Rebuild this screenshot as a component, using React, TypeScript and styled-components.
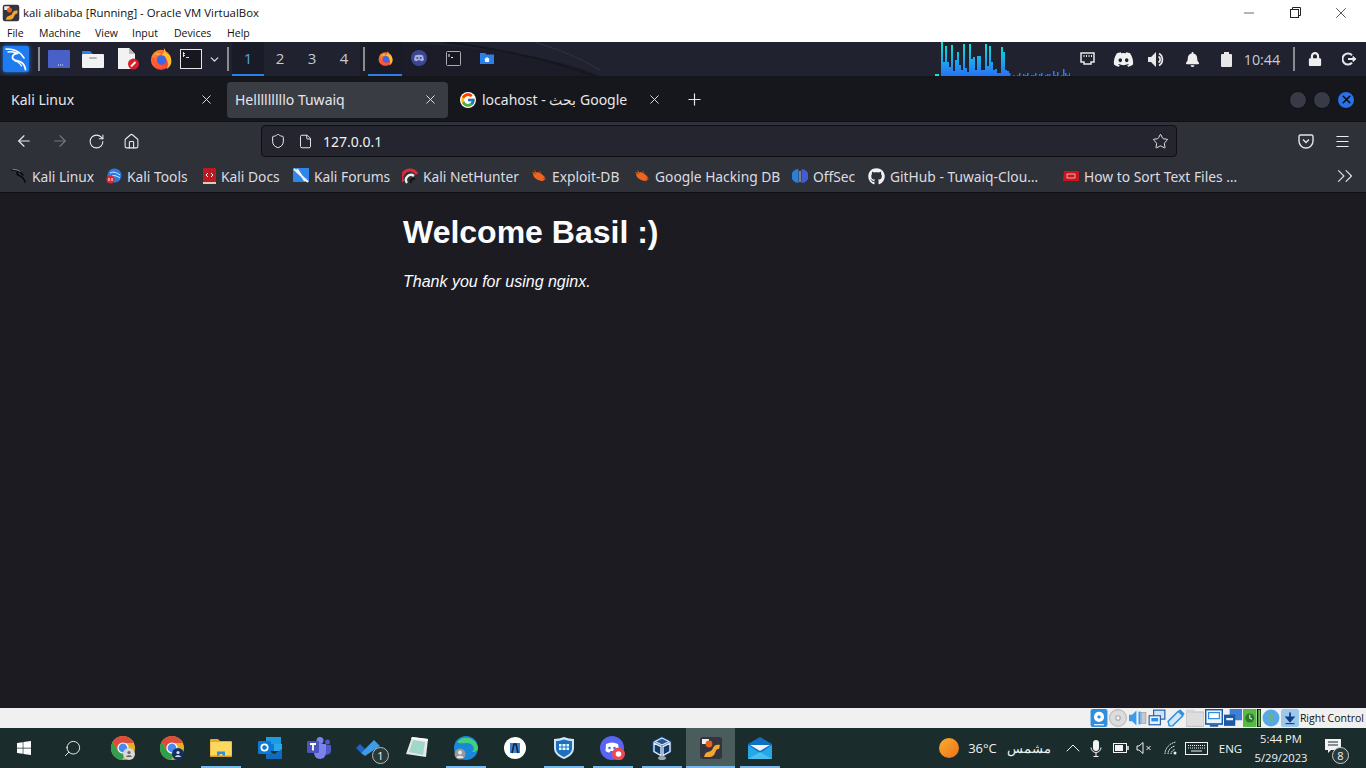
import React from "react";
import styled, { createGlobalStyle } from "styled-components";
import {
  ArrowLeft,
  ArrowRight,
  ChevronDown,
  ChevronUp,
  ChevronsRight,
  File,
  Home,
  Menu,
  Minus,
  Plus,
  RotateCw,
  Search,
  Shield,
  Star,
  X,
} from "lucide-react";
import { FaDiscord, FaGithub, FaWindows, FaBell, FaLock } from "react-icons/fa";
import { FcGoogle } from "react-icons/fc";

const GlobalStyle = createGlobalStyle`
  html, body { margin: 0; padding: 0; background: #1c1b22; overflow: hidden; }
  * { box-sizing: border-box; }
`;

const Screen = styled.div`
  width: 1366px;
  height: 768px;
  display: flex;
  flex-direction: column;
  font-family: "Open Sans", "Noto Sans", sans-serif;
  overflow: hidden;
`;

/* ---------- VirtualBox window chrome ---------- */
const TitleBar = styled.div`
  height: 25px;
  background: #fff;
  display: flex;
  align-items: center;
  padding: 0 2px;
  color: #111;
  font: 11.4px "Open Sans", sans-serif;
`;
const TitleText = styled.span`
  margin-left: 3px;
  flex: 1;
`;
const WinButton = styled.div`
  width: 46px;
  height: 25px;
  display: flex;
  align-items: center;
  justify-content: center;
  color: #222;
`;
const MenuBar = styled.div`
  height: 17px;
  padding-bottom: 2px;
  background: #fff;
  display: flex;
  align-items: center;
  color: #111;
  font: 10.5px "Open Sans", sans-serif;
`;
const MenuItem = styled.span<{ $w: number }>`
  width: ${(p) => p.$w}px;
  padding-left: 7px;
`;

/* ---------- Xfce panel ---------- */
const Panel = styled.div`
  position: relative;
  height: 36px;
  background: #20222f;
  border-bottom: 2px solid #15161c;
  display: flex;
  align-items: center;
  color: #d8dae0;
  overflow: hidden;
`;
const PanelArc = styled.svg`
  position: absolute;
  left: 360px;
  top: 0;
`;
const PanelSlot = styled.div<{ $w: number }>`
  position: relative;
  width: ${(p) => p.$w}px;
  height: 34px;
  flex: none;
  display: flex;
  align-items: center;
  justify-content: center;
  svg {
    flex: none;
  }
`;
const KaliButton = styled.div`
  width: 26px;
  height: 26px;
  margin-left: 3px;
  background: #1f7bf0;
  box-shadow: 0 0 4px #1f7bf0;
  border-radius: 2px;
  display: flex;
  align-items: center;
  justify-content: center;
`;
const PanelSep = styled.div<{ $ml: number; $mr: number }>`
  position: relative;
  width: 2px;
  height: 24px;
  background: #8a8c92;
  flex: none;
  margin-left: ${(p) => p.$ml}px;
  margin-right: ${(p) => p.$mr}px;
`;
const Workspace = styled.div<{ $active?: boolean }>`
  position: relative;
  width: 32px;
  height: 34px;
  flex: none;
  display: flex;
  align-items: center;
  justify-content: center;
  font: 15px "Open Sans", sans-serif;
  color: ${(p) => (p.$active ? "#5aa0e8" : "#c4cad6")};
  background: ${(p) => (p.$active ? "#191b26" : "transparent")};
  border-bottom: 2px solid ${(p) => (p.$active ? "#2a7fe8" : "transparent")};
`;
const TaskButton = styled.div<{ $active?: boolean }>`
  position: relative;
  width: 34px;
  height: 34px;
  flex: none;
  display: flex;
  align-items: center;
  justify-content: center;
  background: ${(p) => (p.$active ? "#191b26" : "transparent")};
  border-bottom: 2px solid ${(p) => (p.$active ? "#2a7fe8" : "transparent")};
`;
const Clock = styled.div`
  position: relative;
  width: 58px;
  flex: none;
  text-align: center;
  color: #c9cdd6;
  font: 14.3px "Open Sans", sans-serif;
`;

/* ---------- Firefox ---------- */
const TabStrip = styled.div`
  height: 43px;
  background: #16171d;
  display: flex;
  align-items: center;
  padding-left: 3px;
  gap: 3px;
  color: #e6e6ea;
  font: 14px "Noto Sans", sans-serif;
`;
const Tab = styled.div<{ $active?: boolean }>`
  width: 221px;
  height: 36px;
  flex: none;
  display: flex;
  align-items: center;
  padding: 0 10px 0 8px;
  border-radius: 4px;
  background: ${(p) => (p.$active ? "#3a3c44" : "transparent")};
`;
const TabLabel = styled.span`
  flex: 1;
  white-space: nowrap;
`;
const GoogleIcon = styled(FcGoogle)`
  flex: none;
  margin: 0 6px 0 1px;
  background: #fff;
  border-radius: 50%;
`;
const NewTab = styled.div`
  width: 28px;
  margin-left: 5px;
  display: flex;
  justify-content: center;
`;
const TabSpacer = styled.div`
  flex: 1;
`;
const WmDots = styled.div`
  display: flex;
  gap: 6px;
  padding-right: 11px;
`;
const WmDot = styled.div<{ $close?: boolean }>`
  width: 18px;
  height: 18px;
  border-radius: 50%;
  background: ${(p) => (p.$close ? "#2a72e8" : "#383b47")};
  border: 1px solid #101116;
  display: flex;
  align-items: center;
  justify-content: center;
  color: #0c0c10;
`;
const NavBar = styled.div`
  height: 39px;
  background: #2f3139;
  border-top: 1px solid #0f1014;
  display: flex;
  align-items: center;
  color: #e4e4e8;
`;
const NavButton = styled.div<{ $w: number; $dim?: boolean }>`
  width: ${(p) => p.$w}px;
  flex: none;
  display: flex;
  justify-content: center;
  color: ${(p) => (p.$dim ? "#75767c" : "#ececf0")};
`;
const UrlBar = styled.div`
  width: 916px;
  height: 32px;
  flex: none;
  margin-left: 119px;
  margin-right: 111px;
  background: #24252f;
  border: 1px solid #0e0f13;
  border-radius: 4px;
  display: flex;
  align-items: center;
  padding: 0 7px 0 8px;
  font: 14px "Noto Sans", sans-serif;
  color: #f0f0f4;
`;
const PageIcon = styled(File)`
  margin-left: 12px;
`;
const UrlText = styled.span`
  flex: 1;
  margin-left: 10px;
`;
const BookmarkBar = styled.div`
  height: 33px;
  background: #2f3139;
  border-bottom: 1px solid #0f1014;
  display: flex;
  align-items: center;
  padding-left: 11px;
  color: #dcdce0;
  font: 13.8px "Noto Sans", sans-serif;
`;
const Bookmark = styled.div<{ $w: number }>`
  width: ${(p) => p.$w}px;
  flex: none;
  display: flex;
  align-items: center;
  gap: 5px;
  white-space: nowrap;
  svg {
    flex: none;
  }
`;
const MoreBookmarks = styled.div`
  margin-left: auto;
  padding-right: 8px;
  display: flex;
  color: #e4e4e8;
`;
const Page = styled.main`
  flex: 1;
  background: #1c1b22;
  color: #fbfbfe;
  font-family: "Liberation Sans", Arial, sans-serif;
`;
const PageBody = styled.div`
  width: 560px;
  margin: 0 auto;
`;
const Heading = styled.h1`
  margin: 0;
  padding-top: 21px;
  font-size: 32px;
  line-height: 37px;
`;
const Thanks = styled.p`
  margin: 22px 0 0;
  font-size: 16px;
  line-height: 18px;
  font-style: italic;
`;

/* ---------- VirtualBox status bar ---------- */
const StatusBar = styled.div`
  height: 20px;
  background: #f0f0f0;
  display: flex;
  align-items: center;
  justify-content: flex-end;
  font: 10.5px "Open Sans", sans-serif;
  color: #111;
  padding-right: 2px;
`;
const StatusIcon = styled.div`
  width: 19.1px;
  height: 18px;
  display: flex;
  align-items: center;
  justify-content: center;
  svg {
    width: 18px;
    height: 18px;
  }
`;
const HostKey = styled.span`
  white-space: nowrap;
`;

/* ---------- Windows taskbar ---------- */
const Taskbar = styled.div`
  height: 40px;
  background: #1a2c2c;
  display: flex;
  align-items: center;
  color: #f2f2f2;
  font: 13px "Open Sans", sans-serif;
`;
const StartButton = styled.div`
  width: 47px;
  display: flex;
  justify-content: center;
`;
const SearchButton = styled.div`
  width: 51px;
  display: flex;
  justify-content: center;
`;
const FlippedSearch = styled(Search)`
  transform: scaleX(-1);
`;
const AppSlot = styled.div<{ $open?: boolean; $active?: boolean }>`
  position: relative;
  width: 49px;
  height: 40px;
  flex: none;
  display: flex;
  align-items: center;
  justify-content: center;
  background: ${(p) => (p.$active ? "#4a5c5b" : "transparent")};
  &::after {
    content: "";
    display: ${(p) => (p.$open ? "block" : "none")};
    position: absolute;
    bottom: 0;
    left: ${(p) => (p.$active ? 0 : 4.5)}px;
    right: ${(p) => (p.$active ? 0 : 4.5)}px;
    height: 2px;
    background: #76b9ed;
  }
`;
const Tray = styled.div`
  margin-left: auto;
  padding-right: 19px;
  display: flex;
  align-items: center;
`;
const TrayItem = styled.div<{ $w: number; $ml?: number; $small?: boolean }>`
  width: ${(p) => p.$w}px;
  margin-left: ${(p) => p.$ml ?? 0}px;
  flex: none;
  display: flex;
  justify-content: center;
  align-items: center;
  white-space: nowrap;
  font-size: ${(p) => (p.$small ? "11.5px" : "13px")};
  svg {
    flex: none;
  }
`;
const SunDot = styled.div`
  width: 20px;
  height: 20px;
  border-radius: 50%;
  background: linear-gradient(135deg, #f5b02c, #f0701c);
`;
const DateTime = styled.div`
  width: 76px;
  flex: none;
  text-align: center;
  font-size: 11.2px;
  line-height: 19px;
`;
const Notify = styled.div`
  position: relative;
  width: 28px;
  height: 40px;
  padding-top: 11px;
  display: flex;
  justify-content: center;
`;
const NotifyBadge = styled.span`
  position: absolute;
  left: 13px;
  top: 19px;
  width: 17px;
  height: 17px;
  border-radius: 50%;
  background: #2a3a3a;
  border: 1px solid #ccc;
  font-size: 11px;
  line-height: 15px;
  text-align: center;
`;
const CountBadge = styled.span`
  position: absolute;
  left: 29px;
  top: 19px;
  width: 17px;
  height: 17px;
  border-radius: 50%;
  background: #2a3a3a;
  border: 1px solid #bbb;
  font-size: 11px;
  line-height: 15px;
  text-align: center;
`;

/* ---------- drawn icons ---------- */
const Machine = ({ size = 18 }: { size?: number }) => (
  <svg width={size} height={size} viewBox="0 0 24 24">
    <rect x="1" y="1" width="22" height="22" rx="3" fill="#33343f" />
    <rect x="3" y="3" width="7" height="5" fill="#eee" />
    <circle cx="10" cy="8" r="3.4" fill="#e8641a" />
    <path d="M5 21c2-8 7-3 9-9 1-3 4-4 7-3l-1 4c-3 0-3 2-4 4-2 5-6 4-11 4z" fill="#f4a72c" />
  </svg>
);

const KaliMark = () => (
  <svg width="26" height="26" viewBox="0 0 26 26" fill="none" stroke="#fff" strokeLinecap="round">
    <path d="M3 3c6 0 11 1 15 5l3 4" strokeWidth="1.6" />
    <path d="M5 6c4-.5 7 0 9 1.500" strokeWidth="1.400" />
    <path d="M15 7c-3 .5-6 2-5.500 5 .5 3 6 2.500 9 4.500 2.500 1.500 3.500 4 4 7" strokeWidth="1.800" />
    <path d="M12 15c3 1 5 2 6.500 5" strokeWidth="1.200" />
  </svg>
);

const KaliFav = () => (
  <svg width="16" height="16" viewBox="0 0 16 16" fill="none" strokeLinecap="round">
    <path d="M1 2c4 0 8 1 11 5M8 3c-2 1-3 3-1 4 2 1 6 2 7 7" stroke="#08080a" strokeWidth="1.500" />
    <path d="M2 1.500c3 0 5 .5 7 2" stroke="#bbb" strokeWidth="0.700" />
  </svg>
);

const Firefox = ({ size = 22 }: { size?: number }) => (
  <svg width={size} height={size} viewBox="0 0 24 24">
    <defs>
      <linearGradient id="ffg" x1="0" y1="0" x2="1" y2="1">
        <stop offset="0" stopColor="#ff9a2e" />
        <stop offset="0.6" stopColor="#ff4f36" />
        <stop offset="1" stopColor="#e8246a" />
      </linearGradient>
    </defs>
    <circle cx="12" cy="13" r="11" fill="url(#ffg)" />
    <path d="M15 0c3 3 1 5 4 6 4 2 5 8 4 11-1 3-3 5-5 6 3-5 2-12-6-15 3-2 4-4 3-8z" fill="#ffc02e" />
    <circle cx="12.500" cy="13" r="5.200" fill="#3d66e8" />
    <path d="M1.500 11c1 7 7 12 13 11 3-.5 5-2 6-4-3 2-6 2-9 1-5-1-7-4-7-8z" fill="#ff5a2e" />
    <path d="M5 7c2-2 5-2 7-1l-2 2z" fill="#ffb02e" />
  </svg>
);

const Terminal = () => (
  <svg width="22" height="20" viewBox="0 0 22 20">
    <rect x="0.500" y="0.500" width="21" height="19" fill="#17181f" stroke="#e6e6e6" />
    <path d="M3.500 3v5M3 4.500h2M3 6.500h2M6 8.500h3" stroke="#eee" strokeWidth="0.900" fill="none" />
  </svg>
);

const SmallTerminal = () => (
  <svg width="15" height="15" viewBox="0 0 15 15">
    <rect x="0.500" y="0.500" width="14" height="14" rx="1" fill="#17181f" stroke="#a8abb4" />
    <path d="M3 3v3M5 6.500h2" stroke="#eee" fill="none" />
  </svg>
);

const DesktopIcon = () => (
  <svg width="22" height="18" viewBox="0 0 22 18">
    <rect width="22" height="18" rx="1" fill="#4960c8" />
    <path d="M10 15h1M12 15h1M14 15h1" stroke="#eee" />
  </svg>
);

const FolderIcon = () => (
  <svg width="22" height="18" viewBox="0 0 22 18">
    <path d="M0 2a1 1 0 0 1 1-1h7l3 3h10v3H0z" fill="#2a7fe8" />
    <rect y="4" width="22" height="14" rx="1" fill="#f2f2f2" />
    <rect x="7" y="7" width="8" height="2" rx="1" fill="#b8b8b8" />
  </svg>
);

const HomeFolder = () => (
  <svg width="14" height="12" viewBox="0 0 14 12">
    <path d="M0 1h5l1.500 1.500H14V12H0z" fill="#2a7fe8" />
    <path d="M7 5l3 2.500H9V10H5V7.500H4z" fill="#f2f2f2" />
  </svg>
);

const DiscordBadge = () => (
  <svg width="16" height="16" viewBox="0 0 16 16">
    <circle cx="8" cy="8" r="8" fill="#3c4694" />
    <path d="M4 5.500c2.500-1 5.500-1 8 0l1 4.500c-1 .8-2 1.200-3 1.200l-.6-1H6.600l-.6 1c-1 0-2-.4-3-1.200z" fill="#aab2e0" />
    <circle cx="6.300" cy="8" r="1" fill="#3c4694" />
    <circle cx="9.700" cy="8" r="1" fill="#3c4694" />
  </svg>
);

const FileBadge = () => (
  <svg width="21" height="22" viewBox="0 0 21 22">
    <path d="M0 0h11l6 6v15H0z" fill="#f2f2f2" />
    <path d="M11 0l6 6h-6z" fill="#bdbdbd" />
    <circle cx="15.500" cy="16" r="5.500" fill="#d81e2a" />
    <path d="M13 18.500l4.500-4.500" stroke="#fff" strokeWidth="1.800" />
  </svg>
);

const loudBars = [
  34, 14, 30, 14, 9, 31, 5, 16, 24, 11, 6, 32, 8, 4, 32, 17, 19, 6, 20, 20, 6, 6, 32, 10, 30, 14, 6, 7, 3, 3, 29, 24, 6, 5,
];
const quietBars = [
  3, 0, 1, 0, 1, 3, 0, 2, 1, 3, 0, 1, 1, 3, 0, 2, 3, 0, 1, 2, 2, 0, 5, 1, 4, 0, 1, 7, 3, 1, 3,
];

const Spectrum = () => (
  <svg width="135" height="34" viewBox="935 0 135 34">
    <defs>
      <linearGradient id="spec" gradientUnits="userSpaceOnUse" x1="0" y1="0" x2="0" y2="34">
        <stop offset="0" stopColor="#0ce8cc" />
        <stop offset="0.45" stopColor="#18b4ea" />
        <stop offset="1" stopColor="#2a70f4" />
      </linearGradient>
    </defs>
    <rect x="935" y="32" width="4" height="2" fill="#16e6c4" />
    {loudBars.map((h, i) => (
      <rect key={i} x={941 + i * 2} y={34 - h} width={2} height={h} fill="url(#spec)" />
    ))}
    {quietBars.map((h, i) => (
      <rect key={`q${i}`} x={1009 + i * 2} y={34 - h} width={1.500} height={h} fill="url(#spec)" />
    ))}
  </svg>
);

const Ethernet = () => (
  <svg width="15" height="14" viewBox="0 0 15 14" fill="none" stroke="#e8e8e8" strokeWidth="1.500">
    <path d="M1 1h13v9h-3v2H4v-2H1z" />
    <path d="M4 3v2M6.500 3v2M9 3v2M11.500 3v2" strokeWidth="1" />
  </svg>
);
const SpeakerPanel = () => (
  <svg width="18" height="17" viewBox="0 0 18 17" fill="#e8e8e8">
    <path d="M0 6h3l5-5v15l-5-5H0z" />
    <path d="M11 2.500a7 7 0 0 1 0 12M10.500 5.500a3.500 3.500 0 0 1 0 6" stroke="#e8e8e8" strokeWidth="1.700" fill="none" />
  </svg>
);
const BatteryPanel = () => (
  <svg width="11" height="15" viewBox="0 0 11 15">
    <rect x="3" width="5" height="2" fill="#e8e8e8" />
    <rect y="2" width="11" height="13" rx="1" fill="#e8e8e8" />
  </svg>
);
const Logout = () => (
  <svg width="15" height="14" viewBox="0 0 15 14" fill="none" stroke="#e8e8e8" strokeWidth="2">
    <path d="M10 3.200A5.500 5.500 0 1 0 10 10.800" />
    <path d="M6 7h7" />
    <path d="M11 4.500L14 7l-3 2.500z" fill="#e8e8e8" strokeWidth="1" />
  </svg>
);
const Pocket = () => (
  <svg width="16" height="15" viewBox="0 0 16 15" fill="none" stroke="#e4e4e8" strokeWidth="1.400">
    <path d="M2.500 1h11A1.500 1.500 0 0 1 15 2.500V7A7 7 0 0 1 1 7V2.500A1.500 1.500 0 0 1 2.500 1z" />
    <path d="M5 5.500L8 8.500l3-3" />
  </svg>
);

/* bookmark favicons */
const ToolsFav = () => (
  <svg width="16" height="16" viewBox="0 0 16 16">
    <circle cx="8.500" cy="7.500" r="7" fill="#2e7be0" />
    <path d="M4 5c4-2 7 0 10 2M6 8c3-1 5 0 8 2" stroke="#dfe9f8" fill="none" />
    <circle cx="4.500" cy="11.500" r="4" fill="#d8282a" />
    <path d="M3 10v3M6 10v3" stroke="#fff" />
  </svg>
);
const DocsFav = () => (
  <svg width="13" height="16" viewBox="0 0 13 16">
    <rect width="13" height="15" rx="1" fill="#b81c22" />
    <rect y="14" width="13" height="2" fill="#d9cdb8" />
    <path d="M5 5L3 7l2 2M8 5l2 2-2 2" stroke="#fff" fill="none" />
  </svg>
);
const ForumsFav = () => (
  <svg width="16" height="16" viewBox="0 0 16 16">
    <rect width="16" height="14" fill="#2e86e8" />
    <path d="M1 1l14 13M4 1l8 12" stroke="#f2f2f2" strokeWidth="2" />
  </svg>
);
const HunterFav = () => (
  <svg width="16" height="16" viewBox="0 0 16 16">
    <path d="M1 14A8 8 0 0 1 15 6" stroke="#e02a3a" strokeWidth="3" fill="none" />
    <path d="M5 15A5 5 0 0 1 12 8" stroke="#eee" strokeWidth="2.400" fill="none" />
    <path d="M9 15a3 3 0 0 1 4-4" stroke="#111" strokeWidth="2" fill="none" />
  </svg>
);
const BugFav = () => (
  <svg width="16" height="14" viewBox="0 0 16 14">
    <ellipse cx="8" cy="7.500" rx="6.500" ry="3.600" transform="rotate(30 8 7.500)" fill="#ee6420" />
    <path d="M1 3l4 2M3 1l3 3M15 10h-3M9 2l1 2" stroke="#a04a1a" />
  </svg>
);
const OffSecFav = () => (
  <svg width="16" height="16" viewBox="0 0 16 16">
    <path d="M6.500 1A7 7 0 0 0 6.500 15z" fill="#2a7fd8" />
    <path d="M9.500 1a7 7 0 0 1 0 14z" fill="#3f5fd0" />
    <path d="M7.500 3h1v11h-1z" fill="#c8c8d8" />
  </svg>
);
const HudFav = () => (
  <svg width="16" height="10" viewBox="0 0 16 10">
    <path d="M1 0h15v10H0z" fill="#c8161c" />
    <path d="M4 3h8v4H4z" fill="none" stroke="#f2f2f2" strokeWidth="0.700" />
  </svg>
);

/* taskbar icons */
const Chrome = ({ badge }: { badge: string }) => (
  <svg width="24" height="24" viewBox="0 0 24 24">
    <circle cx="12" cy="12" r="12" fill="#e8b020" />
    <path d="M12 0A12 12 0 0 0 1.600 6L7 15 12 7h10.400A12 12 0 0 0 12 0z" fill="#dd4b3e" />
    <path d="M1.600 6A12 12 0 0 0 11 24l5-9-9 0z" fill="#2f9e4f" />
    <circle cx="12" cy="12" r="5.600" fill="#fff" />
    <circle cx="12" cy="12" r="4.400" fill="#4a89f3" />
    <circle cx="18" cy="18" r="6" fill={badge} />
    <circle cx="18" cy="16.500" r="1.600" fill={badge === "#d8d8d8" ? "#666" : "#dde"} />
    <path d="M15 21c.5-2.400 5.500-2.400 6 0z" fill={badge === "#d8d8d8" ? "#666" : "#dde"} />
  </svg>
);
const Explorer = () => (
  <svg width="22" height="18" viewBox="0 0 22 18">
    <path d="M0 1a1 1 0 0 1 1-1h7l2 2h11a1 1 0 0 1 1 1v14a1 1 0 0 1-1 1H1a1 1 0 0 1-1-1z" fill="#e8a92c" />
    <rect x="0.500" y="3" width="21" height="14.500" fill="#fcd85e" />
    <path d="M7 17.500v-5h8v5h-2.500v-2.500h-3v2.500z" fill="#2d8fd5" />
    <rect x="0" y="16.500" width="22" height="1.500" fill="#d89c28" />
  </svg>
);
const Outlook = () => (
  <svg width="24" height="22" viewBox="0 0 24 22">
    <rect x="8" width="15" height="8" fill="#1b9de2" />
    <rect x="8" y="7" width="8" height="7" fill="#0f78d4" />
    <rect x="16" y="7" width="8" height="7" fill="#28a8ea" />
    <path d="M8 12l8 5 8-5v10H8z" fill="#0f6cbd" />
    <rect y="4" width="13" height="13" rx="1" fill="#0f78d4" />
    <circle cx="6.500" cy="10.500" r="3.200" fill="none" stroke="#fff" strokeWidth="1.700" />
  </svg>
);
const Teams = () => (
  <svg width="24" height="22" viewBox="0 0 24 22">
    <circle cx="13" cy="3.500" r="3.500" fill="#7b83eb" />
    <circle cx="20.500" cy="5" r="2.500" fill="#5059c9" />
    <path d="M17 8h7v7a4 4 0 0 1-7 1z" fill="#5059c9" />
    <path d="M7 7h12v9a6 6 0 0 1-12 0z" fill="#7b83eb" />
    <rect y="4" width="12" height="12" rx="1" fill="#4b53bc" />
    <path d="M3 7h6M6 7v6.500" stroke="#fff" strokeWidth="1.800" />
  </svg>
);
const Todo = () => (
  <svg width="24" height="17" viewBox="0 0 24 17">
    <path d="M0 8l4-4 5 5-4 4z" fill="#1f63c4" />
    <path d="M5 13L18 0l6 6-15 10z" fill="#3d9be9" />
  </svg>
);
const Notes = () => (
  <svg width="22" height="22" viewBox="0 0 22 22">
    <path d="M6 0l16 2-2 18L0 17z" fill="#e8e8e8" />
    <path d="M7 3l12 2-2 13L3 15z" fill="#9fd8c8" />
    <path d="M6 0l16 2-.3 2L5 2z" fill="#fafafa" />
  </svg>
);
const Edge = () => (
  <svg width="24" height="24" viewBox="0 0 24 24">
    <circle cx="12" cy="12" r="12" fill="#1a88d8" />
    <path d="M3 6a12 12 0 0 1 21 6c0 3-3 4-6 4 4-3 1-9-5-9-4 0-8 1-10-1z" fill="#44d07a" />
    <circle cx="6" cy="18" r="5.500" fill="#9a9a9a" />
    <circle cx="6" cy="16.500" r="2" fill="#e8e8e8" />
    <path d="M2.500 22c.5-3 6.500-3 7 0z" fill="#e8e8e8" />
  </svg>
);
const AiIcon = () => (
  <svg width="22" height="22" viewBox="0 0 22 22">
    <circle cx="11" cy="11" r="11" fill="#fff" />
    <path d="M6 6h10v10H6z" fill="#3a7fd0" />
    <path d="M8 16l2-9h2l2 9" fill="none" stroke="#13233a" strokeWidth="1.600" />
  </svg>
);
const ShieldApp = () => (
  <svg width="20" height="22" viewBox="0 0 20 22">
    <path d="M0 2c3 0 7-1 10-2 3 1 7 2 10 2v9c0 6-5 9-10 11C5 20 0 17 0 11z" fill="#cfe6f7" />
    <path d="M2 4c3 0 6-1 8-1.600 2 .6 5 1.600 8 1.600v7c0 5-4 7-8 9-4-2-8-4-8-9z" fill="#1f6fc0" />
    <path d="M5 7h10v6H5z" fill="#dff" />
    <path d="M5 10h10M8 7v6M12 7v6" stroke="#1f6fc0" />
  </svg>
);
const DiscordApp = () => (
  <svg width="25" height="24" viewBox="0 0 25 24">
    <circle cx="12" cy="12" r="12" fill="#5865f2" />
    <path d="M6 8c4-2 8-2 12 0l1.500 7c-1.500 1-3 1.500-4 1.500l-1-1.500h-4l-1 1.500c-1 0-2.500-.5-4-1.500z" fill="#fff" />
    <circle cx="9.500" cy="12" r="1.300" fill="#5865f2" />
    <circle cx="14.500" cy="12" r="1.300" fill="#5865f2" />
    <circle cx="18.500" cy="18" r="6.500" fill="#ea4a54" />
    <circle cx="18.500" cy="18" r="2.800" fill="#fff" />
  </svg>
);
const VBoxApp = () => (
  <svg width="20" height="24" viewBox="0 0 20 24">
    <path d="M10 0l10 5v11l-10 5L0 16V5z" fill="#103a6c" />
    <path d="M10 2l7 3.500-7 3.500-7-3.500z" fill="#1d5a9e" stroke="#dfe8f2" strokeWidth="1.200" />
    <path d="M2 7l7 3.500v9L2 15.500zM18 7l-7 3.500v9l7-4z" fill="none" stroke="#dfe8f2" strokeWidth="1.400" />
    <ellipse cx="10" cy="22" rx="4" ry="2" fill="#9aa4b0" />
  </svg>
);
const MailApp = () => (
  <svg width="24" height="22" viewBox="0 0 24 22">
    <path d="M12 0l12 7v15H0V7z" fill="#0f6fc0" />
    <path d="M2 8h20L12 14z" fill="#f2f2f2" />
    <path d="M0 8l12 8 12-8v14H0z" fill="#27a7e8" />
    <path d="M0 22l12-7 12 7z" fill="#46c1f0" />
  </svg>
);

/* virtualbox status icons */
const vboxIcons = [
  <svg key="hd" viewBox="0 0 15 16"><rect width="15" height="16" rx="2" fill="#2f8ee0" /><circle cx="7.500" cy="7" r="4.500" fill="#fff" /><circle cx="7.500" cy="7" r="1.500" fill="#2f8ee0" /><path d="M3 14h9" stroke="#fff" /></svg>,
  <svg key="cd" viewBox="0 0 16 16"><circle cx="8" cy="8" r="7.500" fill="#dcdcdc" stroke="#bbb" /><circle cx="8" cy="8" r="2" fill="#f4f4f4" stroke="#aaa" /></svg>,
  <svg key="audio" viewBox="0 0 17 16"><path d="M0 5h3l4-4v14l-4-4H0z" fill="#3a9be8" /><rect x="9" y="2" width="2" height="12" fill="#3a9be8" /><rect x="12" y="3" width="4" height="10" fill="#c8c8c8" stroke="#888" strokeWidth="0.500" /></svg>,
  <svg key="net" viewBox="0 0 16 16"><rect x="5" y="1" width="10" height="8" fill="#cfe4f7" stroke="#1c5aa8" /><rect x="1" y="6" width="10" height="8" fill="#e8f2fb" stroke="#1c5aa8" /><rect x="3" y="8" width="6" height="3" fill="#2f8ee0" /></svg>,
  <svg key="usb" viewBox="0 0 16 16"><path d="M1 11L10 2l4 4-9 9H2z" fill="#cfe8fb" stroke="#2f8ee0" strokeWidth="1.300" /><path d="M11 1l4 4" stroke="#2f8ee0" strokeWidth="2" /></svg>,
  <svg key="share" viewBox="0 0 15 14"><rect y="2" width="15" height="12" fill="#dedede" stroke="#c4c4c4" /><rect width="7" height="3" fill="#d4d4d4" /></svg>,
  <svg key="display" viewBox="0 0 15 15"><rect x="0.500" y="0.500" width="14" height="12" fill="#e8f2fb" stroke="#1c5aa8" strokeWidth="1.400" /><rect x="3" y="3" width="9" height="5" fill="#fff" stroke="#2f8ee0" /><path d="M4 14h7" stroke="#1c5aa8" strokeWidth="1.500" /></svg>,
  <svg key="record" viewBox="0 0 16 16"><rect x="5" y="0" width="11" height="10" fill="#3f7fd4" /><rect x="0" y="5" width="10" height="10" fill="#1c5aa8" /><rect x="2" y="8" width="6" height="2" fill="#e8f2fb" /></svg>,
  <svg key="cpu" viewBox="0 0 16 16"><rect width="12" height="16" fill="#58b848" /><circle cx="6" cy="8" r="4" fill="#2c7a28" /><path d="M6 5v3l2 1" stroke="#d8f0c8" fill="none" /><rect x="13" y="0" width="3" height="16" fill="#5ac048" stroke="#000" /></svg>,
  <svg key="mouse" viewBox="0 0 17 17"><circle cx="8.500" cy="8.500" r="8" fill="#58a8e8" /><path d="M5 3l6 4-3 2 4 4-6-3 2-3z" fill="#68c048" /></svg>,
  <svg key="key" viewBox="0 0 16 16"><rect width="16" height="16" rx="2" fill="#9cc8ee" /><path d="M8 3v7M5 7.500L8 11l3-3.500z" stroke="#0f3f80" strokeWidth="1.600" fill="#0f3f80" /><path d="M4 13h8" stroke="#0f3f80" /></svg>,
];

const apps = [
  { icon: <Chrome badge="#d8d8d8" /> },
  { icon: <Chrome badge="#12305e" /> },
  { icon: <Explorer />, open: true },
  { icon: <Outlook /> },
  { icon: <Teams /> },
  { icon: <Todo />, count: "1" },
  { icon: <Notes /> },
  { icon: <Edge />, open: true },
  { icon: <AiIcon /> },
  { icon: <ShieldApp />, open: true },
  { icon: <DiscordApp />, open: true },
  { icon: <VBoxApp />, open: true },
  { icon: <Machine size={24} />, open: true, active: true },
  { icon: <MailApp />, open: true },
];

const bookmarks = [
  { label: "Kali Linux", w: 95, icon: <KaliFav /> },
  { label: "Kali Tools", w: 97, icon: <ToolsFav /> },
  { label: "Kali Docs", w: 90, icon: <DocsFav /> },
  { label: "Kali Forums", w: 109, icon: <ForumsFav /> },
  { label: "Kali NetHunter", w: 129, icon: <HunterFav /> },
  { label: "Exploit-DB", w: 103, icon: <BugFav /> },
  { label: "Google Hacking DB", w: 158, icon: <BugFav /> },
  { label: "OffSec", w: 76, icon: <OffSecFav /> },
  { label: "GitHub - Tuwaiq-Clou…", w: 195, icon: <FaGithub size={17} color="#f2f2f2" /> },
  { label: "How to Sort Text Files …", w: 182, icon: <HudFav /> },
];

export default function App() {
  return (
    <Screen>
      <GlobalStyle />
      <TitleBar>
        <Machine />
        <TitleText>kali alibaba [Running] - Oracle VM VirtualBox</TitleText>
        <WinButton><Minus size={16} strokeWidth={1} /></WinButton>
        <WinButton>
          <svg width="11" height="11" viewBox="0 0 11 11" fill="none" stroke="#222">
            <rect x="0.500" y="2.500" width="8" height="8" />
            <path d="M2.500 2.500v-2h8v8h-2" />
          </svg>
        </WinButton>
        <WinButton><X size={18} strokeWidth={1} /></WinButton>
      </TitleBar>
      <MenuBar>
        <MenuItem $w={32}>File</MenuItem>
        <MenuItem $w={56}>Machine</MenuItem>
        <MenuItem $w={37}>View</MenuItem>
        <MenuItem $w={42}>Input</MenuItem>
        <MenuItem $w={53}>Devices</MenuItem>
        <MenuItem $w={40}>Help</MenuItem>
      </MenuBar>

      <Panel>
        <PanelArc width="260" height="34" viewBox="0 0 260 34" fill="none">
          <path d="M20 0C110 4 190 12 240 34H0V0z" fill="#1b1c28" />
          <path d="M175 0c25 8 45 16 65 28" stroke="#30323e" strokeWidth="1" />
          <path d="M85 0c50 6 100 16 150 34" stroke="#15161e" strokeWidth="2" />
        </PanelArc>
        <KaliButton><KaliMark /></KaliButton>
        <PanelSep $ml={9} $mr={0} />
        <PanelSlot $w={38}><DesktopIcon /></PanelSlot>
        <PanelSlot $w={30}><FolderIcon /></PanelSlot>
        <PanelSlot $w={40}><FileBadge /></PanelSlot>
        <PanelSlot $w={26}><Firefox /></PanelSlot>
        <PanelSlot $w={34}><Terminal /></PanelSlot>
        <PanelSlot $w={12}><ChevronDown size={13} strokeWidth={2.500} /></PanelSlot>
        <PanelSep $ml={7} $mr={3} />
        <Workspace $active>1</Workspace>
        <Workspace>2</Workspace>
        <Workspace>3</Workspace>
        <Workspace>4</Workspace>
        <PanelSep $ml={3} $mr={3} />
        <TaskButton $active><Firefox size={15} /></TaskButton>
        <TaskButton><DiscordBadge /></TaskButton>
        <TaskButton><SmallTerminal /></TaskButton>
        <TaskButton><HomeFolder /></TaskButton>
        <PanelSlot $w={431} />
        <Spectrum />
        <PanelSlot $w={7} />
        <PanelSlot $w={20}><Ethernet /></PanelSlot>
        <PanelSlot $w={52}><FaDiscord size={21} color="#f0f0f0" /></PanelSlot>
        <PanelSlot $w={16}><SpeakerPanel /></PanelSlot>
        <PanelSlot $w={54}><FaBell size={15} color="#eee" /></PanelSlot>
        <PanelSlot $w={14}><BatteryPanel /></PanelSlot>
        <Clock>10:44</Clock>
        <PanelSep $ml={2} $mr={0} />
        <PanelSlot $w={40}><FaLock size={14} color="#eee" /></PanelSlot>
        <PanelSlot $w={28}><Logout /></PanelSlot>
      </Panel>

      <TabStrip>
        <Tab>
          <TabLabel>Kali Linux</TabLabel>
          <X size={15} strokeWidth={1.500} />
        </Tab>
        <Tab $active>
          <TabLabel>Helllllllllo Tuwaiq</TabLabel>
          <X size={15} strokeWidth={1.500} />
        </Tab>
        <Tab>
          <GoogleIcon size={16} />
          <TabLabel>locahost - بحث Google</TabLabel>
          <X size={15} strokeWidth={1.500} />
        </Tab>
        <NewTab><Plus size={19} strokeWidth={1.500} /></NewTab>
        <TabSpacer />
        <WmDots>
          <WmDot />
          <WmDot />
          <WmDot $close><X size={13} strokeWidth={3} /></WmDot>
        </WmDots>
      </TabStrip>

      <NavBar>
        <NavButton $w={48}><ArrowLeft size={18} strokeWidth={1.500} /></NavButton>
        <NavButton $w={24} $dim><ArrowRight size={18} strokeWidth={1.500} /></NavButton>
        <NavButton $w={48}><RotateCw size={17} strokeWidth={1.500} /></NavButton>
        <NavButton $w={22}><Home size={17} strokeWidth={1.500} /></NavButton>
        <UrlBar>
          <Shield size={16} strokeWidth={1.500} />
          <PageIcon size={15} strokeWidth={1.500} />
          <UrlText>127.0.0.1</UrlText>
          <Star size={17} strokeWidth={1.300} />
        </UrlBar>
        <NavButton $w={36}><Pocket /></NavButton>
        <NavButton $w={36}><Menu size={17} strokeWidth={1.500} /></NavButton>
      </NavBar>

      <BookmarkBar>
        {bookmarks.map((b) => (
          <Bookmark key={b.label} $w={b.w}>
            {b.icon}
            <span>{b.label}</span>
          </Bookmark>
        ))}
        <MoreBookmarks><ChevronsRight size={26} strokeWidth={1} /></MoreBookmarks>
      </BookmarkBar>

      <Page>
        <PageBody>
          <Heading>Welcome Basil :)</Heading>
          <Thanks>Thank you for using nginx.</Thanks>
        </PageBody>
      </Page>

      <StatusBar>
        {vboxIcons.map((icon) => (
          <StatusIcon key={icon.key}>{icon}</StatusIcon>
        ))}
        <HostKey>Right Control</HostKey>
      </StatusBar>

      <Taskbar>
        <StartButton><FaWindows size={16} color="#fff" /></StartButton>
        <SearchButton><FlippedSearch size={19} strokeWidth={1.200} /></SearchButton>
        {apps.map((a, i) => (
          <AppSlot key={i} $open={a.open} $active={a.active}>
            {a.icon}
            {a.count && <CountBadge>{a.count}</CountBadge>}
          </AppSlot>
        ))}
        <Tray>
          <TrayItem $w={25}><SunDot /></TrayItem>
          <TrayItem $w={43}>36°C</TrayItem>
          <TrayItem $w={50}>مشمس</TrayItem>
          <TrayItem $w={14} $ml={12}><ChevronUp size={24} strokeWidth={1} /></TrayItem>
          <TrayItem $w={32}>
            <svg width="12" height="17" viewBox="0 0 12 17" fill="none" stroke="#f2f2f2">
              <rect x="3" y="0" width="6" height="11" rx="3" fill="#f2f2f2" stroke="none" />
              <path d="M1 7.500a5 5 0 0 0 10 0M6 12.500V16M3.500 16.500h5" />
            </svg>
          </TrayItem>
          <TrayItem $w={18}>
            <svg width="16" height="10" viewBox="0 0 16 10" fill="none" stroke="#f2f2f2">
              <rect x="0.500" y="0.500" width="13" height="9" />
              <rect x="2" y="2" width="8" height="6" fill="#f2f2f2" stroke="none" />
              <path d="M15 3v4" strokeWidth="1.500" />
            </svg>
          </TrayItem>
          <TrayItem $w={28}>
            <svg width="16" height="14" viewBox="0 0 16 14" fill="none" stroke="#f2f2f2">
              <path d="M1 5h2l4-3.500v11L3 9H1z" />
              <path d="M10.500 5l4 4M14.500 5l-4 4" />
            </svg>
          </TrayItem>
          <TrayItem $w={26}>
            <svg width="14" height="14" viewBox="0 0 14 14" fill="none" stroke="#f2f2f2">
              <path d="M1 13C1 7 6 2 12 1M4 13c0-4 3-7 7-8M7 13c0-2 1.500-4 4-4.500" strokeDasharray="1.500 0.700" />
              <circle cx="11" cy="12" r="1.500" fill="#f2f2f2" stroke="none" />
            </svg>
          </TrayItem>
          <TrayItem $w={24}>
            <svg width="23" height="13" viewBox="0 0 23 13" fill="none" stroke="#f2f2f2">
              <rect x="0.500" y="0.500" width="22" height="12" />
              <path d="M3 3.500h17M3 6h17" strokeDasharray="1 1" />
              <path d="M6 9h11" />
            </svg>
          </TrayItem>
          <TrayItem $w={25} $ml={10} $small>ENG</TrayItem>
          <DateTime>5:44 PM<br />5/29/2023</DateTime>
          <Notify>
            <svg width="16" height="15" viewBox="0 0 16 15">
              <path d="M0 0h16v11H6l-3 3v-3H0z" fill="#f2f2f2" />
              <path d="M3 3h10M3 6h10" stroke="#1a2c2c" />
            </svg>
            <NotifyBadge>8</NotifyBadge>
          </Notify>
        </Tray>
      </Taskbar>
    </Screen>
  );
}
